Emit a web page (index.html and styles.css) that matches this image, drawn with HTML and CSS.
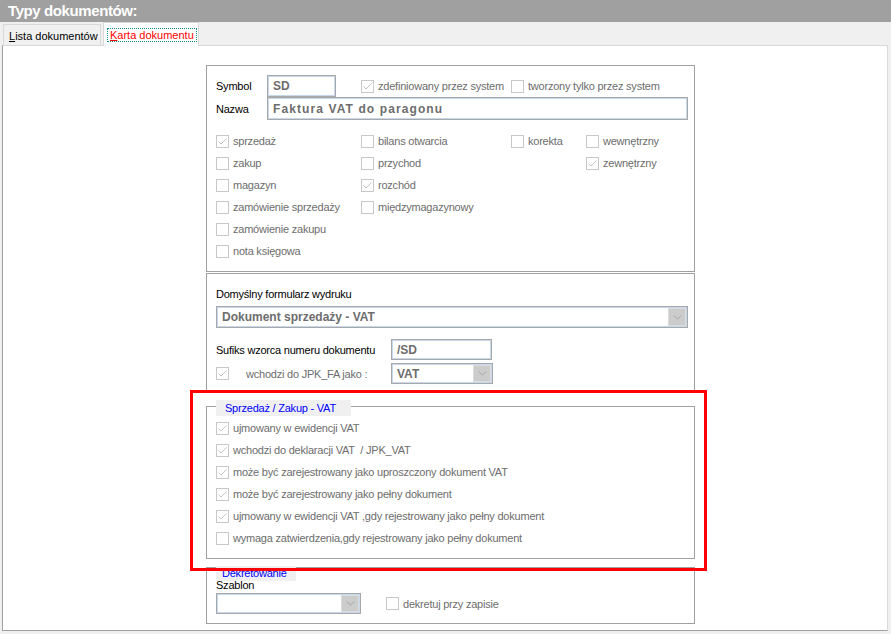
FILE: index.html
```html
<!DOCTYPE html>
<html lang="pl">
<head>
<meta charset="utf-8">
<title>Typy dokumentów</title>
<link rel="stylesheet" href="styles.css">
</head>
<body>
<div class="titlebar">Typy dokumentów:</div>
<div class="tabs">
  <div class="tab"><span><u>L</u>ista dokumentów</span></div>
  <div class="tab active"><span class="focus"><u>K</u>arta dokumentu</span></div>
</div>
<div class="content">
  <div class="column">
    <div class="panel p1">
      <div class="row3">
        <div class="cell-flex"><span class="lbl">Symbol</span><span class="field w-sd">SD</span></div>
        <label class="chk"><span class="cb"><svg viewBox="0 0 11 11" width="11" height="11"><path d="M1.5 5.5 L4 8 L9.5 2.5" fill="none" stroke="#c4c4c4" stroke-width="1"/></svg></span>zdefiniowany przez system</label>
        <label class="chk"><span class="cb"></span>tworzony tylko przez system</label>
      </div>
      <div class="row-nazwa"><span class="lbl">Nazwa</span><span class="field w-nazwa">Faktura VAT do paragonu</span></div>
      <div class="grid4">
        <label class="chk"><span class="cb"><svg viewBox="0 0 11 11" width="11" height="11"><path d="M1.5 5.5 L4 8 L9.5 2.5" fill="none" stroke="#c4c4c4" stroke-width="1"/></svg></span>sprzedaż</label>
        <label class="chk"><span class="cb"></span>bilans otwarcia</label>
        <label class="chk"><span class="cb"></span>korekta</label>
        <label class="chk"><span class="cb"></span>wewnętrzny</label>

        <label class="chk"><span class="cb"></span>zakup</label>
        <label class="chk"><span class="cb"></span>przychod</label>
        <span></span>
        <label class="chk"><span class="cb"><svg viewBox="0 0 11 11" width="11" height="11"><path d="M1.5 5.5 L4 8 L9.5 2.5" fill="none" stroke="#c4c4c4" stroke-width="1"/></svg></span>zewnętrzny</label>

        <label class="chk"><span class="cb"></span>magazyn</label>
        <label class="chk"><span class="cb"><svg viewBox="0 0 11 11" width="11" height="11"><path d="M1.5 5.5 L4 8 L9.5 2.5" fill="none" stroke="#c4c4c4" stroke-width="1"/></svg></span>rozchód</label>
        <span></span><span></span>

        <label class="chk"><span class="cb"></span>zamówienie sprzedaży</label>
        <label class="chk"><span class="cb"></span>międzymagazynowy</label>
        <span></span><span></span>

        <label class="chk"><span class="cb"></span>zamówienie zakupu</label>
        <span></span><span></span><span></span>

        <label class="chk"><span class="cb"></span>nota księgowa</label>
        <span></span><span></span><span></span>
      </div>
    </div>

    <div class="panel p2">
      <div class="line-lbl">Domyślny formularz wydruku</div>
      <div class="field select w-form"><span class="val">Dokument sprzedaży - VAT</span><span class="dd"><svg width="9" height="5" viewBox="0 0 9 5"><path d="M0.5 0.5 L4.5 4 L8.5 0.5" fill="none" stroke="#a8a8a8"/></svg></span></div>
      <div class="row-sufiks"><span class="lbl-wide">Sufiks wzorca numeru dokumentu</span><span class="field w-suf">/SD</span></div>
      <div class="row-jpk">
        <label class="chk jpk"><span class="cb"><svg viewBox="0 0 11 11" width="11" height="11"><path d="M1.5 5.5 L4 8 L9.5 2.5" fill="none" stroke="#c4c4c4" stroke-width="1"/></svg></span><span class="jpk-txt">wchodzi do JPK_FA jako :</span></label>
        <div class="field select w-vat"><span class="val">VAT</span><span class="dd"><svg width="9" height="5" viewBox="0 0 9 5"><path d="M0.5 0.5 L4.5 4 L8.5 0.5" fill="none" stroke="#a8a8a8"/></svg></span></div>
      </div>
    </div>

    <div class="group g-vat">
      <div class="legend lg-vat">Sprzedaż / Zakup - VAT</div>
      <div class="rows">
        <label class="chk"><span class="cb"><svg viewBox="0 0 11 11" width="11" height="11"><path d="M1.5 5.5 L4 8 L9.5 2.5" fill="none" stroke="#c4c4c4" stroke-width="1"/></svg></span>ujmowany w ewidencji VAT</label>
        <label class="chk"><span class="cb"><svg viewBox="0 0 11 11" width="11" height="11"><path d="M1.5 5.5 L4 8 L9.5 2.5" fill="none" stroke="#c4c4c4" stroke-width="1"/></svg></span>wchodzi do deklaracji VAT &nbsp;/ JPK_VAT</label>
        <label class="chk"><span class="cb"><svg viewBox="0 0 11 11" width="11" height="11"><path d="M1.5 5.5 L4 8 L9.5 2.5" fill="none" stroke="#c4c4c4" stroke-width="1"/></svg></span>może być zarejestrowany jako uproszczony dokument VAT</label>
        <label class="chk"><span class="cb"><svg viewBox="0 0 11 11" width="11" height="11"><path d="M1.5 5.5 L4 8 L9.5 2.5" fill="none" stroke="#c4c4c4" stroke-width="1"/></svg></span>może być zarejestrowany jako pełny dokument</label>
        <label class="chk"><span class="cb"><svg viewBox="0 0 11 11" width="11" height="11"><path d="M1.5 5.5 L4 8 L9.5 2.5" fill="none" stroke="#c4c4c4" stroke-width="1"/></svg></span>ujmowany w ewidencji VAT ,gdy rejestrowany jako pełny dokument</label>
        <label class="chk"><span class="cb"></span>wymaga zatwierdzenia,gdy rejestrowany jako pełny dokument</label>
      </div>
    </div>

    <div class="group g-dek">
      <div class="legend lg-dek">Dekretowanie</div>
      <div class="szablon">Szablon</div>
      <div class="row-dek">
        <div class="field select w-szab"><span class="val"></span><span class="dd"><svg width="9" height="5" viewBox="0 0 9 5"><path d="M0.5 0.5 L4.5 4 L8.5 0.5" fill="none" stroke="#a8a8a8"/></svg></span></div>
        <label class="chk dek"><span class="cb"></span>dekretuj przy zapisie</label>
      </div>
    </div>
  </div>
  <div class="annot"></div>
</div>
</body>
</html>
```

FILE: styles.css
```css
html, body {
  margin: 0;
  padding: 0;
}
body {
  background: #f0f0f0;
  font-family: "Liberation Sans", Arial, sans-serif;
  font-size: 11px;
  letter-spacing: -0.22px;
  color: #000;
  width: 891px;
  height: 634px;
  overflow: hidden;
}
.titlebar {
  height: 22px;
  box-sizing: border-box;
  background: #a0a0a0;
  color: #fff;
  font-weight: bold;
  font-size: 15px;
  letter-spacing: -0.4px;
  line-height: 22px;
  padding-left: 8px;
}
.tabs {
  height: 23px;
  display: flex;
  align-items: flex-end;
  padding-left: 3px;
  gap: 2px;
  position: relative;
  z-index: 1;
}
.tab {
  height: 21px;
  width: 98px;
  box-sizing: border-box;
  border: 1px solid #d9d9d9;
  border-bottom: none;
  background: #f0f0f0;
  display: flex;
  align-items: center;
  padding: 2px 0 0 5px;
  letter-spacing: 0;
}
.tab.active {
  height: 24px;
  width: 96px;
  background: #fff;
  margin-bottom: -1px;
  padding: 0 0 0 3px;
}
.focus {
  color: #f00;
  border: 1px dotted #108c8c;
  padding: 0 2px;
  line-height: 12px;
}
.content {
  position: relative;
  margin-left: 2px;
  width: 886px;
  height: 586px;
  box-sizing: border-box;
  border: 1px solid #d9d9d9;
  border-left-color: #a0a0a0;
  border-bottom-color: #a0a0a0;
  background: #fff;
  padding: 19px 0 0 203px;
}
.column {
  width: 489px;
}
.panel, .group {
  width: 489px;
  box-sizing: border-box;
  border: 1px solid #a0a0a0;
  padding-left: 9px;
}
.p1 {
  height: 207px;
  padding-top: 9px;
}
.row3 {
  display: grid;
  grid-template-columns: 145px 150px 1fr;
  height: 22px;
  align-items: center;
}
.cell-flex {
  display: flex;
  align-items: center;
  height: 22px;
}
.lbl {
  width: 51px;
  flex: none;
}
.field {
  box-sizing: border-box;
  border: 1px solid #a8a8a8;
  box-shadow: inset 0 0 0 1px #c6d8ee;
  background: #fff;
  font-weight: bold;
  color: #6d6d6d;
  font-size: 12px;
  letter-spacing: 0;
  padding-left: 5px;
  display: flex;
  align-items: center;
  flex: none;
}
.w-sd { width: 69px; height: 22px; }
.row-nazwa {
  display: flex;
  align-items: center;
  height: 23px;
}
.w-nazwa { width: 421px; height: 23px; letter-spacing: 1.1px; }
.chk {
  display: flex;
  align-items: center;
  color: #6d6d6d;
  white-space: nowrap;
}
.cb {
  width: 13px;
  height: 13px;
  box-sizing: border-box;
  border: 1px solid #c8c8c8;
  background: #fff;
  margin-right: 4px;
  flex: none;
  display: flex;
  align-items: center;
  justify-content: center;
}
.cb svg { display: block; }
.grid4 {
  margin-top: 10px;
  display: grid;
  grid-template-columns: 145px 150px 75px 1fr;
  grid-auto-rows: 22px;
  align-items: center;
}
.p2 {
  height: 119px;
  margin-top: 1px;
  padding-top: 13px;
}
.line-lbl {
  line-height: 14px;
  height: 14px;
}
.select {
  padding-right: 1px;
}
.select .val {
  flex: 1;
}
.dd {
  width: 18px;
  height: 18px;
  box-sizing: border-box;
  background: #cccccc;
  border: 1px solid #dcdcdc;
  display: flex;
  align-items: center;
  justify-content: center;
  flex: none;
}
.w-form {
  width: 472px;
  height: 22px;
  margin-top: 5px;
}
.row-sufiks {
  margin-top: 11px;
  display: flex;
  align-items: center;
  height: 21px;
}
.lbl-wide {
  width: 175px;
  flex: none;
}
.w-suf { width: 101px; height: 21px; }
.row-jpk {
  margin-top: 3px;
  display: flex;
  align-items: center;
  height: 21px;
}
.jpk {
  width: 175px;
  flex: none;
}
.jpk-txt {
  margin-left: 13px;
}
.w-vat { width: 102px; height: 21px; }
.w-vat .dd { height: 17px; }
.g-vat {
  margin-top: 14px;
  height: 153px;
}
.legend {
  box-sizing: border-box;
  background: #f0f0f0;
  color: #0000ff;
}
.lg-vat {
  width: 135px;
  height: 16px;
  line-height: 16px;
  margin-top: -7px;
  padding-left: 9px;
}
.rows {
  margin-top: 1px;
  display: grid;
  grid-auto-rows: 22px;
  align-items: center;
}
.g-dek {
  margin-top: 8px;
  height: 57px;
}
.lg-dek {
  width: 80px;
  height: 15px;
  line-height: 15px;
  margin-top: -2px;
  padding-left: 6px;
}
.szablon {
  line-height: 13px;
  height: 13px;
  margin-top: -2px;
}
.row-dek {
  margin-top: 1px;
  display: flex;
  align-items: center;
  height: 21px;
}
.w-szab { width: 145px; height: 21px; }
.w-szab .dd { height: 17px; }
.dek {
  margin-left: 25px;
}
.annot {
  position: absolute;
  left: 187px;
  top: 344px;
  width: 517px;
  height: 181px;
  box-sizing: border-box;
  border: 3px solid #ff0000;
  pointer-events: none;
}
```
